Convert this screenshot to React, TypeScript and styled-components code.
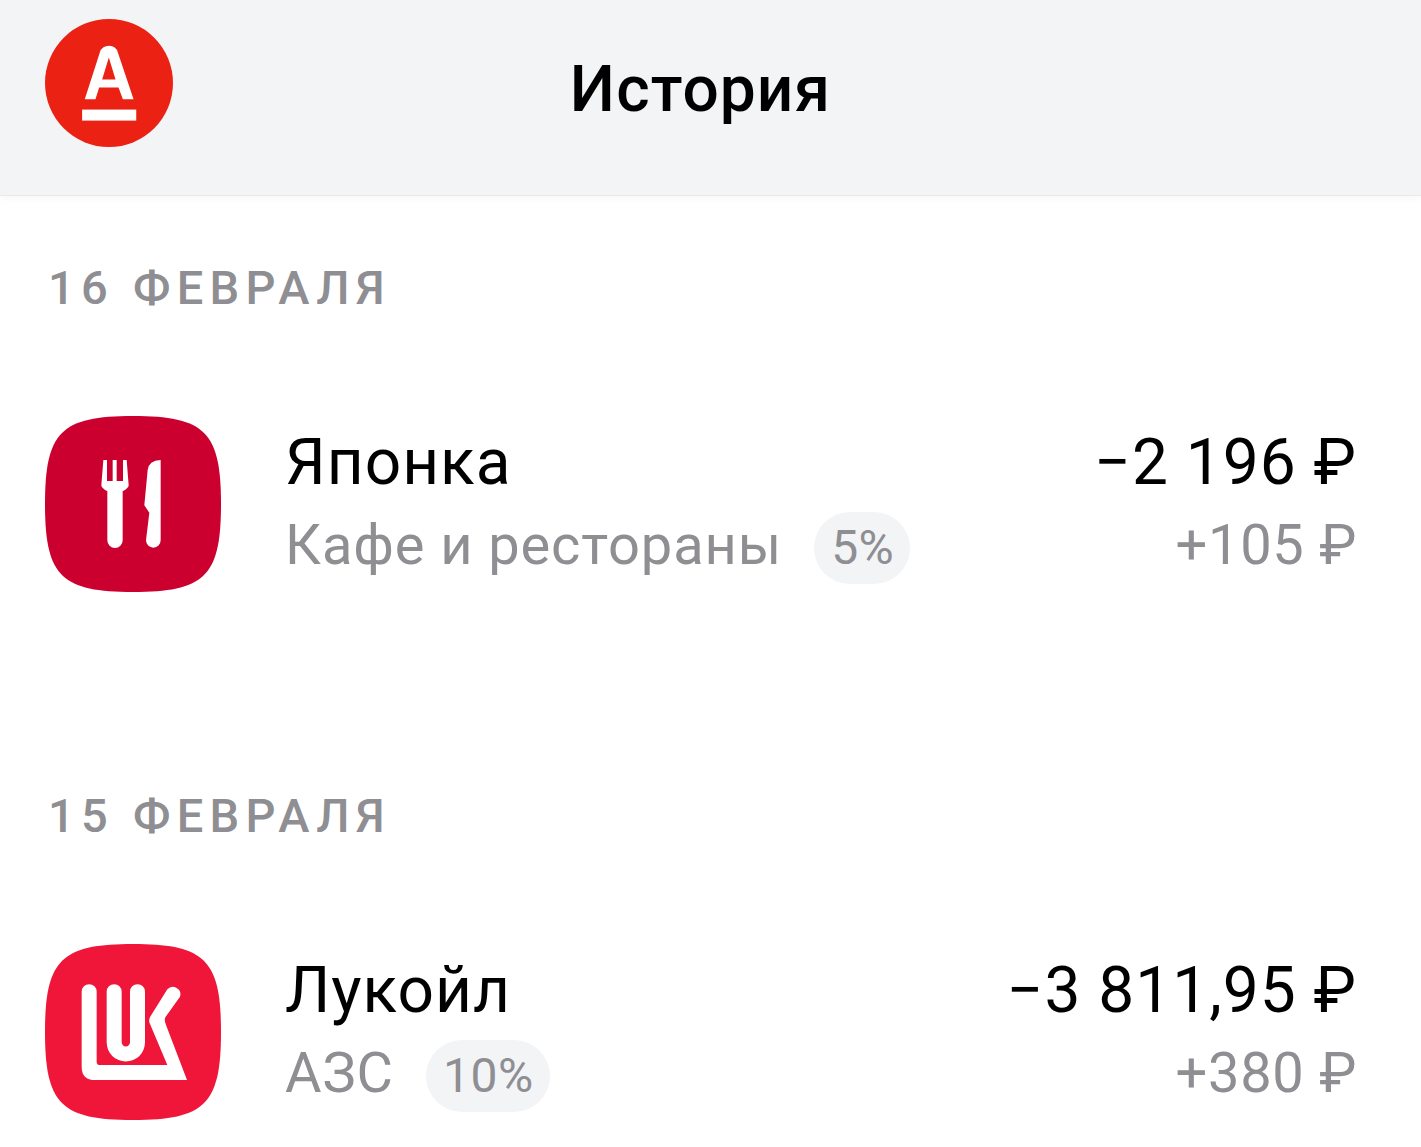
import React from 'react'
import styled, { createGlobalStyle } from 'styled-components'

const GlobalStyle = createGlobalStyle`
  html, body {
    margin: 0;
    padding: 0;
    background: #ffffff;
    font-family: Roboto, "Noto Sans", sans-serif;
    color: #000000;
  }
`

const Page = styled.div`
  width: 1421px;
  min-height: 1147px;
  height: 1147px;
  overflow: hidden;
  background: #ffffff;
`

const Header = styled.header`
  height: 195px;
  box-sizing: border-box;
  background: #f3f4f6;
  padding: 19px 0 0 45px;
  display: grid;
  grid-template-columns: 128px 1fr;
  box-shadow: 0 1px 0 #e9eaec, 0 3px 8px rgba(0, 0, 0, 0.04);
`

const Title = styled.h1`
  margin: 0 0 0 -16px;
  padding-right: 177px;
  font-size: 64px;
  line-height: 142px;
  font-weight: 500;
  letter-spacing: 1.1px;
  text-align: center;
`

const Day = styled.section`
  padding: 64px 64px 131px 45px;
`

const DayLabel = styled.div`
  padding-left: 3px;
  font-size: 47px;
  line-height: 57px;
  font-weight: 500;
  letter-spacing: 6.3px;
  word-spacing: 1px;
  color: #8e8e93;
  margin-bottom: 100px;
`

const Row = styled.div`
  display: grid;
  grid-template-columns: 176px 1fr auto;
  column-gap: 64px;
  align-items: center;
`

const Tile = styled.svg`
  display: block;
  width: 176px;
  height: 176px;
`

const Info = styled.div`
  display: flex;
  flex-direction: column;
  gap: 10px;
`

const Name = styled.div`
  font-size: 64px;
  line-height: 72px;
  letter-spacing: 1px;
`

const Sub = styled.div`
  display: flex;
  align-items: center;
  gap: 32px;
  height: 72px;
  font-size: 56px;
  letter-spacing: 0.9px;
  color: #8e8e93;
`

const Badge = styled.span`
  height: 72px;
  margin-top: 6px;
  padding: 0 16px 0 17px;
  border-radius: 36px;
  background: #f3f4f6;
  font-size: 48px;
  line-height: 72px;
  letter-spacing: 0.5px;
`

const Amounts = styled.div`
  display: flex;
  flex-direction: column;
  align-items: flex-end;
  gap: 10px;
`

const Amount = styled.div`
  font-size: 64px;
  line-height: 72px;
  letter-spacing: 1px;
`

const Cashback = styled.div`
  font-size: 56px;
  line-height: 72px;
  letter-spacing: 0.7px;
  color: #8e8e93;
`

const SQUIRCLE =
  'M264 0C480 0 528 48 528 264C528 480 480 528 264 528C48 528 0 480 0 264C0 48 48 0 264 0Z'

const AlfaLogo = () => (
  <svg width="128" height="128" viewBox="135 57 383 383">
    <circle cx="326.5" cy="248.5" r="191.5" fill="#ea2113" />
    <path
      fillRule="evenodd"
      fill="#ffffff"
      d="M299 157Q305 137 327 137Q347 137 353 157L400 297H368L355 262H297L286 297H254ZM326 172L306 238H346Z"
    />
    <rect x="246" y="328" width="162" height="33" fill="#ffffff" />
  </svg>
)

const CafeIcon = () => (
  <Tile viewBox="0 0 528 528">
    <path d={SQUIRCLE} fill="#cc002f" />
    <g transform="translate(-45 -48)" fill="#ffffff">
      <path d="M220 180H231V243H248V180H260V243H279V180H290L296 256Q296 264 278 274V421A23 23 0 0 1 232 421V274Q214 264 214 256Z" />
      <path d="M392 180V421A21 21 0 0 1 348 421L358 338L343 316L353 210Q356 182 392 180Z" />
    </g>
  </Tile>
)

const LukoilIcon = () => (
  <Tile viewBox="0 0 528 528">
    <path d={SQUIRCLE} fill="#ef1639" />
    <g transform="translate(-45 -42)" fill="#ffffff">
      <path d="M155 185A22.5 22.5 0 0 1 200 185V395Q200 405 210 405H412L360 282Q354 270 362 258L412 178A22.5 22.5 0 0 1 450 200L406 262Q402 270 408 285L471 450H195Q155 450 155 410Z" />
      <path d="M230 185A22.5 22.5 0 0 1 275 185V337A12.5 12.5 0 0 0 300 337V185A22.5 22.5 0 0 1 345 185V337A57.5 57.5 0 0 1 230 337Z" />
    </g>
  </Tile>
)

interface Purchase {
  date: string
  icon: React.ReactNode
  name: string
  category: string
  percent: string
  amount: string
  bonus: string
}

const purchases: Purchase[] = [
  {
    date: '16 ФЕВРАЛЯ',
    icon: <CafeIcon />,
    name: 'Японка',
    category: 'Кафе и рестораны',
    percent: '5%',
    amount: '−2 196 ₽',
    bonus: '+105 ₽',
  },
  {
    date: '15 ФЕВРАЛЯ',
    icon: <LukoilIcon />,
    name: 'Лукойл',
    category: 'АЗС',
    percent: '10%',
    amount: '−3 811,95 ₽',
    bonus: '+380 ₽',
  },
]

const App: React.FC = () => (
  <Page>
    <GlobalStyle />
    <Header>
      <AlfaLogo />
      <Title>История</Title>
    </Header>
    {purchases.map((p) => (
      <Day key={p.date}>
        <DayLabel>{p.date}</DayLabel>
        <Row>
          {p.icon}
          <Info>
            <Name>{p.name}</Name>
            <Sub>
              {p.category}
              <Badge>{p.percent}</Badge>
            </Sub>
          </Info>
          <Amounts>
            <Amount>{p.amount}</Amount>
            <Cashback>{p.bonus}</Cashback>
          </Amounts>
        </Row>
      </Day>
    ))}
  </Page>
)

export default App
